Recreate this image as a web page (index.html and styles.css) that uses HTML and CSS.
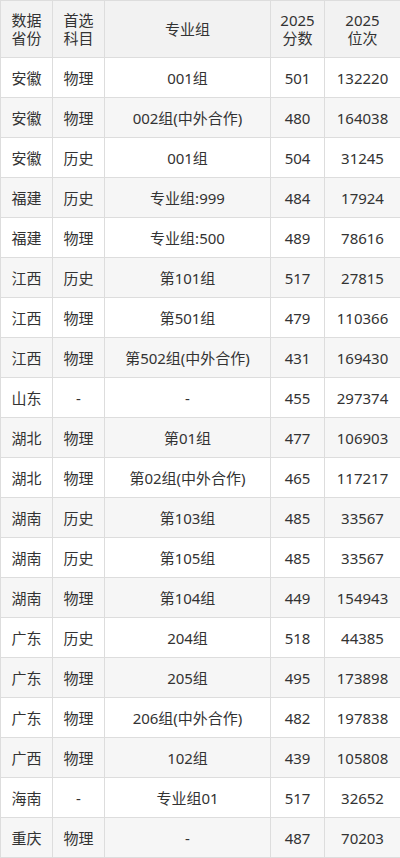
FILE: index.html
```html
<!DOCTYPE html>
<html lang="zh">
<head>
<meta charset="utf-8">
<link rel="stylesheet" href="styles.css">
</head>
<body>
<table class="score-table">
  <colgroup>
    <col class="c1"><col class="c2"><col class="c3"><col class="c4"><col class="c5">
  </colgroup>
  <thead>
    <tr class="head">
      <th>数据<br>省份</th>
      <th>首选<br>科目</th>
      <th>专业组</th>
      <th>2025<br>分数</th>
      <th>2025<br>位次</th>
    </tr>
  </thead>
  <tbody>
    <tr><td>安徽</td><td>物理</td><td>001组</td><td>501</td><td>132220</td></tr>
    <tr><td>安徽</td><td>物理</td><td>002组(中外合作)</td><td>480</td><td>164038</td></tr>
    <tr><td>安徽</td><td>历史</td><td>001组</td><td>504</td><td>31245</td></tr>
    <tr><td>福建</td><td>历史</td><td>专业组:999</td><td>484</td><td>17924</td></tr>
    <tr><td>福建</td><td>物理</td><td>专业组:500</td><td>489</td><td>78616</td></tr>
    <tr><td>江西</td><td>历史</td><td>第101组</td><td>517</td><td>27815</td></tr>
    <tr><td>江西</td><td>物理</td><td>第501组</td><td>479</td><td>110366</td></tr>
    <tr><td>江西</td><td>物理</td><td>第502组(中外合作)</td><td>431</td><td>169430</td></tr>
    <tr><td>山东</td><td>-</td><td>-</td><td>455</td><td>297374</td></tr>
    <tr><td>湖北</td><td>物理</td><td>第01组</td><td>477</td><td>106903</td></tr>
    <tr><td>湖北</td><td>物理</td><td>第02组(中外合作)</td><td>465</td><td>117217</td></tr>
    <tr><td>湖南</td><td>历史</td><td>第103组</td><td>485</td><td>33567</td></tr>
    <tr><td>湖南</td><td>历史</td><td>第105组</td><td>485</td><td>33567</td></tr>
    <tr><td>湖南</td><td>物理</td><td>第104组</td><td>449</td><td>154943</td></tr>
    <tr><td>广东</td><td>历史</td><td>204组</td><td>518</td><td>44385</td></tr>
    <tr><td>广东</td><td>物理</td><td>205组</td><td>495</td><td>173898</td></tr>
    <tr><td>广东</td><td>物理</td><td>206组(中外合作)</td><td>482</td><td>197838</td></tr>
    <tr><td>广西</td><td>物理</td><td>102组</td><td>439</td><td>105808</td></tr>
    <tr><td>海南</td><td>-</td><td>专业组01</td><td>517</td><td>32652</td></tr>
    <tr><td>重庆</td><td>物理</td><td>-</td><td>487</td><td>70203</td></tr>
  </tbody>
</table>
</body>
</html>
```
FILE: styles.css
```css
html, body {
  margin: 0;
  padding: 0;
  background: #ffffff;
}
body {
  font-family: "Noto Sans", "Noto Sans CJK SC", sans-serif;
  font-size: 15px;
  color: #333333;
}
.score-table {
  width: 400px;
  border-collapse: collapse;
  table-layout: fixed;
}
.c1 { width: 52px; }
.c2 { width: 52px; }
.c3 { width: 166px; }
.c4 { width: 54px; }
.c5 { width: 76px; }
.score-table th,
.score-table td {
  border: 1px solid #dddddd;
  text-align: center;
  vertical-align: middle;
  padding: 0;
  white-space: nowrap;
}
.score-table th {
  font-weight: normal;
  background: #f2f2f2;
  line-height: 18px;
  height: 56px;
}
.score-table td {
  height: 39px;
  line-height: 20px;
}
.score-table tbody tr:nth-child(even) td {
  background: #f6f6f6;
}
```
